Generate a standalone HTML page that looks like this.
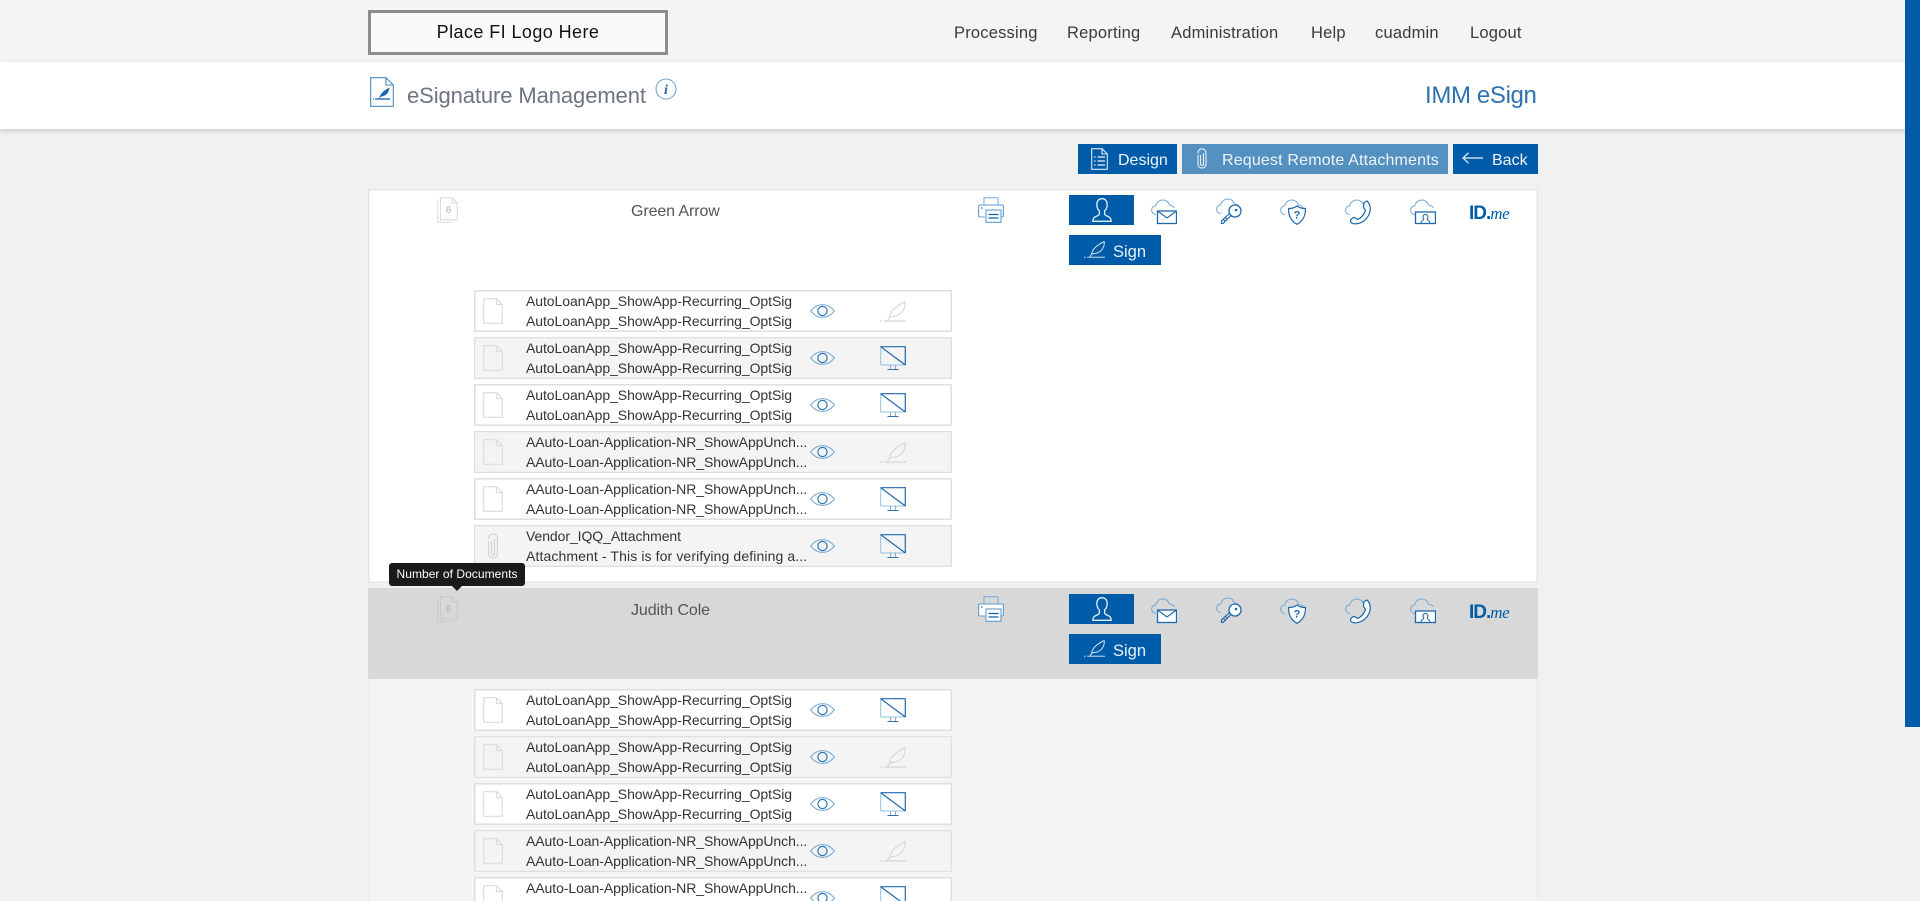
<!DOCTYPE html>
<html lang="en">
<head>
<meta charset="utf-8">
<title>eSignature Management</title>
<style>
html,body{margin:0;padding:0;width:1920px;height:901px;overflow:hidden;background:#f1f1f1;font-family:"Liberation Sans",Arial,sans-serif}
.abs,.row,.row>*,.card,.btn,.nav a{position:absolute}
#page{position:relative;width:1920px;height:901px;overflow:hidden}
#top{left:0;top:0;width:1920px;height:62px;background:#f4f4f4}
#band{left:0;top:62px;width:1920px;height:67px;background:#fff;box-shadow:0 2px 5px rgba(0,0,0,.16)}
#logo{left:368px;top:10px;width:300px;height:45px;box-sizing:border-box;border:3px solid #8c8c8c;background:#fafafa;color:#111;font-size:18px;line-height:39px;text-align:center;letter-spacing:.42px}
.nav a{top:24px;font-size:16.5px;line-height:19px;color:#3a3a3a;text-decoration:none;white-space:nowrap;letter-spacing:.2px}
#title{left:407px;top:82px;font-size:22px;line-height:28px;color:#6d7580;white-space:nowrap;letter-spacing:-.1px}
#brand{left:1425px;top:82px;font-size:24px;line-height:28px;color:#2d72ae;white-space:nowrap;letter-spacing:-.35px}
.btn{height:30px;background:#005ca8;color:#eef5fb;font-size:16px;line-height:34px;white-space:nowrap}
.btn span{position:absolute;top:0}
.btn svg{position:absolute}
.card{left:368px;width:1170px;box-sizing:border-box}
#c1{top:189px;height:394px;background:#fff;box-shadow:inset 0 0 0 1px #e4e4e4,inset 0 0 0 2px #f3f3f3}
#c2{top:588px;height:330px;background:#f4f4f4;box-shadow:inset 2px 0 0 #eee,inset -2px 0 0 #eee}
.hd2{position:absolute;left:0;top:0;width:100%;height:91px;background:#d8d8d8}
.name{position:absolute;left:263px;top:13px;font-size:16px;line-height:20px;color:#555;white-space:nowrap;letter-spacing:-.1px}
.ic{position:absolute;overflow:visible}
.row{left:106px;width:478px;height:42px;box-shadow:inset 0 0 0 1px #dfdfdf,inset 0 0 0 2px #eeeeee;background:#fff}
.row.g{background:#f4f4f4}
.row div{left:52px;font-size:14px;line-height:20px;color:#333;white-space:nowrap;letter-spacing:-.07px}
.row .a{top:1px}.row .b{top:21px}
.row .doc{left:9px;top:8px}
.row .eye{left:336px;top:14px}
.row .act{left:406px;top:9px}
.sub{position:absolute;left:701px;width:65px;height:30px;background:#005ca8}
.sgn{position:absolute;left:701px;width:92px;height:30px;background:#005ca8;color:#e8f1f8;font-size:16.5px;line-height:35px}
.sgn span{position:absolute;left:44px;top:0}
#tip{left:389px;top:563px;width:136px;height:23px;background:#1a1a1a;border-radius:3px;color:#fff;font-size:12px;line-height:23px;text-align:center;letter-spacing:.05px}
#tip:after{content:"";position:absolute;left:63px;top:23px;border:5px solid transparent;border-top-color:#1a1a1a;border-bottom:0}
#bar{left:1905px;top:0;width:15px;height:727px;background:#005ca8}
.idme{position:absolute;color:#005ca8;font-weight:bold;font-size:19px;line-height:20px;white-space:nowrap;letter-spacing:-1px}
.idme i{font-family:"Liberation Serif",serif;font-weight:normal;font-size:17px;letter-spacing:-.4px}
</style>
</head>
<body>
<svg width="0" height="0" style="position:absolute">
<defs>
<symbol id="doc" viewBox="0 0 20 26"><path d="M.7.7H13.500L19.300 6.500V25.300H.7Z M13.500.7V6.500H19.300" fill="none" stroke="#dcdcdc" stroke-width="1.200"/></symbol>
<symbol id="clip" viewBox="0 0 20 26"><path d="M5.500 6C5.500 2.800 7.500 1 10 1S14.500 2.800 14.500 6V20C14.500 23.300 12.500 25 10 25S5.500 23.300 5.500 20V8M8.500 8V19.500C8.500 21.300 9 22.300 10 22.300S11.500 21.300 11.500 19.500V6" fill="none" stroke="#d4d4d4" stroke-width="1.200"/></symbol>
<symbol id="eye" viewBox="0 0 25 14"><path d="M.6 7C4 2.800 8 .6 12.500.6S21 2.800 24.400 7C21 11.200 17 13.400 12.500 13.400S4 11.200.6 7Z" fill="none" stroke="#78a9d3" stroke-width="1"/><circle cx="12.500" cy="7" r="4.600" fill="none" stroke="#2a75b5" stroke-width="1.200"/></symbol>
<symbol id="mon" viewBox="0 0 26 24"><path d="M.7 19H25.300" stroke="#8ec4dd" stroke-width="1"/><path d="M.7 .7V19" stroke="#8ec4dd" stroke-width="1"/><path d="M.5 .7H25.300V19M.8 .8L25.300 19" fill="none" stroke="#2068ac" stroke-width="1.200"/><path d="M10.500 19V23.500M15.500 19V23.500" stroke="#9aa5c0" stroke-width="1"/><path d="M7.500 23.500H18.500" stroke="#2d72ae" stroke-width="1"/></symbol>
<symbol id="quill" viewBox="0 0 26 21"><path d="M0 20H2M4 20H26" stroke="currentColor" stroke-width="1.200"/><path d="M7.500 20C8 18.500 8.500 17.500 9.500 16.500 10 10 16 5 25 .7 25.800 8 21 15.500 12 15.500L9.500 16.500" fill="none" stroke="currentColor" stroke-width="1.100"/></symbol>
<symbol id="stack" viewBox="0 0 21 26"><path d="M.7 2V25.300H16" fill="none" stroke="currentColor" stroke-width="1"/><path d="M3.500.7H15L20.300 6V22.800H3.500Z M15 .7V6H20.300" fill="none" stroke="currentColor" stroke-width="1.100"/></symbol>
<symbol id="print" viewBox="0 0 26 26"><path d="M6 8V.7H20V8" fill="none" stroke="#76a9d5" stroke-width="1"/><path d="M7 20H2Q.6 20 .6 18.500V9.500Q.6 8 2 8H24Q25.400 8 25.400 9.500V18.500Q25.400 20 24 20H23" fill="#fff" stroke="#5f9dd0" stroke-width="1.100"/><rect x="8" y="13" width="15" height="12.300" fill="#fff" stroke="#5f9dd0" stroke-width="1.100"/><path d="M10.500 17.500H20.500M10.500 21H20.500" stroke="#0f62aa" stroke-width="1.300"/><path d="M3 11H4.500" stroke="#0f62aa" stroke-width="1.200"/></symbol>
<symbol id="person" viewBox="0 0 20 24"><path d="M10 .7C6.600 .7 4.800 3.300 4.800 6.500 4.800 9.100 5.800 11.500 7.400 12.900V15.500C7.400 16.700 6.400 17.500 4.800 18.100 2.500 19 .8 20 .8 23.300H19.200C19.200 20 17.500 19 15.200 18.100 13.600 17.500 12.600 16.700 12.600 15.500V12.900C14.200 11.500 15.200 9.100 15.200 6.500 15.200 3.300 13.400 .7 10 .7Z" fill="none" stroke="#e6f0f8" stroke-width="1.300"/></symbol>
<symbol id="cloud" viewBox="0 0 26 26"><path d="M5 15.500C2.400 15.500.6 13.500.6 11 .6 8.600 2.400 7 4.700 7 5.500 3.400 8.200 1 11.600 1 15 1 17.500 3 18.600 6.200 20.600 6.200 22.400 7 23.400 9" fill="none" stroke="#74a8d4" stroke-width="1"/></symbol>
<symbol id="mail" viewBox="0 0 26 26"><use href="#cloud" width="26" height="26"/><rect x="6.500" y="12" width="19" height="12.500" fill="#fff" stroke="#1c69ad" stroke-width="1.300"/><path d="M6.500 12 16 19 25.500 12" fill="none" stroke="#1c69ad" stroke-width="1.100"/></symbol>
<symbol id="key" viewBox="0 0 26 26"><use href="#cloud" width="26" height="26"/><circle cx="19" cy="13" r="6" fill="#fff" stroke="#1c69ad" stroke-width="1.300"/><circle cx="20" cy="12" r="1.300" fill="#1c69ad"/><path d="M15 17.500 7 25.500H5.500V23L14 15M9 23 7 21M11 21 9 19" fill="none" stroke="#1c69ad" stroke-width="1.200"/></symbol>
<symbol id="shield" viewBox="0 0 26 26"><use href="#cloud" width="26" height="26"/><path d="M17 7C19.500 9 22 9.500 25.400 9.500 25.800 15.500 23.500 22 17 25.300 10.500 22 8.300 15.500 8.600 9.500 12 9.500 14.500 9 17 7Z" fill="#fff" stroke="#1c69ad" stroke-width="1.200"/><text x="17" y="19.500" font-family="Liberation Sans" font-size="11" font-weight="bold" text-anchor="middle" fill="#1c69ad">?</text></symbol>
<symbol id="phone" viewBox="0 0 26 26"><use href="#cloud" width="26" height="26"/><path d="M19 3.500 22 2C25.300 5 26.300 10.500 24 15.500 21.500 20.800 16.500 24.300 11 24.800 7.500 25 5.500 23.800 5.500 21.800 5.500 20 7.800 18.500 9.500 18.500L12.500 20.500C15.500 19.500 19 16 20.500 11.500L18.500 8.500Z" fill="#fff" stroke="#1c69ad" stroke-width="1.200"/></symbol>
<symbol id="video" viewBox="0 0 26 26"><use href="#cloud" width="26" height="26"/><rect x="5.500" y="13" width="20" height="11.500" fill="#fff" stroke="#1c69ad" stroke-width="1.300"/><path d="M11 24.500C11 21.500 13.500 21.500 13.800 20 12.500 18.500 12.800 15.500 15.500 15.500S18.500 18.500 17.200 20C17.500 21.500 20 21.500 20 24.500" fill="none" stroke="#1c69ad" stroke-width="1"/></symbol>
</defs>
</svg>
<div id="page">
<div id="top" class="abs"></div>
<div id="band" class="abs"></div>
<div id="logo" class="abs">Place FI Logo Here</div>
<nav class="nav">
<a style="left:954px">Processing</a>
<a style="left:1067px">Reporting</a>
<a style="left:1171px">Administration</a>
<a style="left:1311px">Help</a>
<a style="left:1375px">cuadmin</a>
<a style="left:1470px">Logout</a>
</nav>
<svg class="abs" style="left:370px;top:77px" width="24" height="30" viewBox="0 0 24 30"><path d="M.7.7H16L23.300 8V29.300H.7Z M16 .7V8H23.300" fill="#fff" stroke="#4a88bd" stroke-width="1.100"/><path d="M5 22H20" stroke="#0f62aa" stroke-width="1.300"/><path d="M3 22H3.800" stroke="#0f62aa" stroke-width="1.300"/><path d="M9 21.500C10 17 13.500 13.500 19.500 10.500 19 15 16.500 19 11.500 19.500Z" fill="#1c69ad"/></svg>
<div id="title" class="abs">eSignature Management</div>
<svg class="abs" style="left:655px;top:78px" width="22" height="22" viewBox="0 0 22 22"><circle cx="11" cy="11" r="10" fill="#fff" stroke="#6a9ecb" stroke-width="1"/><text x="11" y="16" font-family="Liberation Serif" font-size="14" font-weight="bold" font-style="italic" text-anchor="middle" fill="#1c5f9e">i</text></svg>
<div id="brand" class="abs">IMM eSign</div>

<div class="btn" style="left:1078px;top:144px;width:99px"><svg style="left:13px;top:4px" width="17" height="22" viewBox="0 0 17 22"><path d="M.7.7H11L16.300 6V21.300H.7Z M11 .7V6H16.300" fill="none" stroke="#dcebf6" stroke-width="1.100"/><path d="M3 9H4.500M6.500 9H14M3 13H4.500M6.500 13H14M3 17H4.500M6.500 17H14" stroke="#eef5fb" stroke-width="1.200"/></svg><span style="left:40px">Design</span></div>
<div class="btn" style="left:1182px;top:144px;width:266px;background:#5490c0"><svg style="left:15px;top:4px" width="10" height="21" viewBox="0 0 10 21"><path d="M1 5.500C1 2.500 2.800.8 5 .8S9 2.500 9 5.500V15.500C9 18.500 7.400 20 5 20S1 18.500 1 15.500V7M3.500 7V15C3.500 16.500 4 17.500 5 17.500S6.500 16.500 6.500 15V5" fill="none" stroke="#e8f1f8" stroke-width="1.100"/></svg><span style="left:40px;letter-spacing:.17px">Request Remote Attachments</span></div>
<div class="btn" style="left:1453px;top:144px;width:85px"><svg style="left:9px;top:8px" width="21" height="12" viewBox="0 0 21 12"><path d="M21 6H1M6.500 .8 1 6 6.500 11.200" fill="none" stroke="#eef5fb" stroke-width="1.200"/></svg><span style="left:39px">Back</span></div>

<section class="card" id="c1">
<svg class="ic" style="left:69px;top:8px;color:#dcdcdc" width="21" height="26"><use href="#stack" width="21" height="26"/></svg>
<svg class="ic" style="left:72px;top:11px" width="16" height="14"><text x="8.500" y="13" font-family="Liberation Sans" font-size="10" font-weight="bold" text-anchor="middle" fill="#c8c8c8">6</text></svg>
<div class="name">Green Arrow</div>
<svg class="ic" style="left:610px;top:8px" width="26" height="26"><use href="#print" width="26" height="26"/></svg>
<div class="sub" style="top:6px"><svg class="ic" style="left:23px;top:3px" width="20" height="24"><use href="#person" width="20" height="24"/></svg></div>
<svg class="ic" style="left:783px;top:10px" width="26" height="26"><use href="#mail" width="26" height="26"/></svg>
<svg class="ic" style="left:848px;top:9px" width="26" height="26"><use href="#key" width="26" height="26"/></svg>
<svg class="ic" style="left:912px;top:10px" width="26" height="26"><use href="#shield" width="26" height="26"/></svg>
<svg class="ic" style="left:977px;top:10px" width="26" height="26"><use href="#phone" width="26" height="26"/></svg>
<svg class="ic" style="left:1042px;top:10px" width="26" height="26"><use href="#video" width="26" height="26"/></svg>
<div class="idme" style="left:1101px;top:15px">ID.<i>me</i></div>
<div class="sgn" style="top:46px"><svg class="ic" style="left:15px;top:6px;color:#e6f0f8" width="21" height="17"><use href="#quill" width="21" height="17"/></svg><span>Sign</span></div>

<div class="row" style="top:101px"><svg class="doc" width="20" height="26"><use href="#doc" width="20" height="26"/></svg><div class="a">AutoLoanApp_ShowApp-Recurring_OptSig</div><div class="b">AutoLoanApp_ShowApp-Recurring_OptSig</div><svg class="eye" width="25" height="14"><use href="#eye" width="25" height="14"/></svg><svg class="act" width="26" height="21" style="top:11px;color:#d5d5d5"><use href="#quill" width="26" height="21"/></svg></div>
<div class="row g" style="top:148px"><svg class="doc" width="20" height="26"><use href="#doc" width="20" height="26"/></svg><div class="a">AutoLoanApp_ShowApp-Recurring_OptSig</div><div class="b">AutoLoanApp_ShowApp-Recurring_OptSig</div><svg class="eye" width="25" height="14"><use href="#eye" width="25" height="14"/></svg><svg class="act" width="26" height="24"><use href="#mon" width="26" height="24"/></svg></div>
<div class="row" style="top:195px"><svg class="doc" width="20" height="26"><use href="#doc" width="20" height="26"/></svg><div class="a">AutoLoanApp_ShowApp-Recurring_OptSig</div><div class="b">AutoLoanApp_ShowApp-Recurring_OptSig</div><svg class="eye" width="25" height="14"><use href="#eye" width="25" height="14"/></svg><svg class="act" width="26" height="24"><use href="#mon" width="26" height="24"/></svg></div>
<div class="row g" style="top:242px"><svg class="doc" width="20" height="26"><use href="#doc" width="20" height="26"/></svg><div class="a">AAuto-Loan-Application-NR_ShowAppUnch...</div><div class="b">AAuto-Loan-Application-NR_ShowAppUnch...</div><svg class="eye" width="25" height="14"><use href="#eye" width="25" height="14"/></svg><svg class="act" width="26" height="21" style="top:11px;color:#d5d5d5"><use href="#quill" width="26" height="21"/></svg></div>
<div class="row" style="top:289px"><svg class="doc" width="20" height="26"><use href="#doc" width="20" height="26"/></svg><div class="a">AAuto-Loan-Application-NR_ShowAppUnch...</div><div class="b">AAuto-Loan-Application-NR_ShowAppUnch...</div><svg class="eye" width="25" height="14"><use href="#eye" width="25" height="14"/></svg><svg class="act" width="26" height="24"><use href="#mon" width="26" height="24"/></svg></div>
<div class="row g" style="top:336px"><svg class="doc" width="20" height="26"><use href="#clip" width="20" height="26"/></svg><div class="a">Vendor_IQQ_Attachment</div><div class="b" style="letter-spacing:.11px">Attachment - This is for verifying defining a...</div><svg class="eye" width="25" height="14"><use href="#eye" width="25" height="14"/></svg><svg class="act" width="26" height="24"><use href="#mon" width="26" height="24"/></svg></div>
</section>

<section class="card" id="c2">
<div class="hd2"></div>
<svg class="ic" style="left:69px;top:8px;color:#cacaca" width="21" height="26"><use href="#stack" width="21" height="26"/></svg>
<svg class="ic" style="left:72px;top:11px" width="16" height="14"><text x="8.500" y="13" font-family="Liberation Sans" font-size="10" font-weight="bold" text-anchor="middle" fill="#bdbdbd">6</text></svg>
<div class="name">Judith Cole</div>
<svg class="ic" style="left:610px;top:8px" width="26" height="26"><use href="#print" width="26" height="26"/></svg>
<div class="sub" style="top:6px"><svg class="ic" style="left:23px;top:3px" width="20" height="24"><use href="#person" width="20" height="24"/></svg></div>
<svg class="ic" style="left:783px;top:10px" width="26" height="26"><use href="#mail" width="26" height="26"/></svg>
<svg class="ic" style="left:848px;top:9px" width="26" height="26"><use href="#key" width="26" height="26"/></svg>
<svg class="ic" style="left:912px;top:10px" width="26" height="26"><use href="#shield" width="26" height="26"/></svg>
<svg class="ic" style="left:977px;top:10px" width="26" height="26"><use href="#phone" width="26" height="26"/></svg>
<svg class="ic" style="left:1042px;top:10px" width="26" height="26"><use href="#video" width="26" height="26"/></svg>
<div class="idme" style="left:1101px;top:15px">ID.<i>me</i></div>
<div class="sgn" style="top:46px"><svg class="ic" style="left:15px;top:6px;color:#e6f0f8" width="21" height="17"><use href="#quill" width="21" height="17"/></svg><span>Sign</span></div>

<div class="row" style="top:101px"><svg class="doc" width="20" height="26"><use href="#doc" width="20" height="26"/></svg><div class="a">AutoLoanApp_ShowApp-Recurring_OptSig</div><div class="b">AutoLoanApp_ShowApp-Recurring_OptSig</div><svg class="eye" width="25" height="14"><use href="#eye" width="25" height="14"/></svg><svg class="act" width="26" height="24"><use href="#mon" width="26" height="24"/></svg></div>
<div class="row g" style="top:148px"><svg class="doc" width="20" height="26"><use href="#doc" width="20" height="26"/></svg><div class="a">AutoLoanApp_ShowApp-Recurring_OptSig</div><div class="b">AutoLoanApp_ShowApp-Recurring_OptSig</div><svg class="eye" width="25" height="14"><use href="#eye" width="25" height="14"/></svg><svg class="act" width="26" height="21" style="top:11px;color:#d5d5d5"><use href="#quill" width="26" height="21"/></svg></div>
<div class="row" style="top:195px"><svg class="doc" width="20" height="26"><use href="#doc" width="20" height="26"/></svg><div class="a">AutoLoanApp_ShowApp-Recurring_OptSig</div><div class="b">AutoLoanApp_ShowApp-Recurring_OptSig</div><svg class="eye" width="25" height="14"><use href="#eye" width="25" height="14"/></svg><svg class="act" width="26" height="24"><use href="#mon" width="26" height="24"/></svg></div>
<div class="row g" style="top:242px"><svg class="doc" width="20" height="26"><use href="#doc" width="20" height="26"/></svg><div class="a">AAuto-Loan-Application-NR_ShowAppUnch...</div><div class="b">AAuto-Loan-Application-NR_ShowAppUnch...</div><svg class="eye" width="25" height="14"><use href="#eye" width="25" height="14"/></svg><svg class="act" width="26" height="21" style="top:11px;color:#d5d5d5"><use href="#quill" width="26" height="21"/></svg></div>
<div class="row" style="top:289px"><svg class="doc" width="20" height="26"><use href="#doc" width="20" height="26"/></svg><div class="a">AAuto-Loan-Application-NR_ShowAppUnch...</div><div class="b">AAuto-Loan-Application-NR_ShowAppUnch...</div><svg class="eye" width="25" height="14"><use href="#eye" width="25" height="14"/></svg><svg class="act" width="26" height="24"><use href="#mon" width="26" height="24"/></svg></div>
</section>

<div id="tip" class="abs">Number of Documents</div>
<div id="bar" class="abs"></div>
</div>
</body>
</html>
